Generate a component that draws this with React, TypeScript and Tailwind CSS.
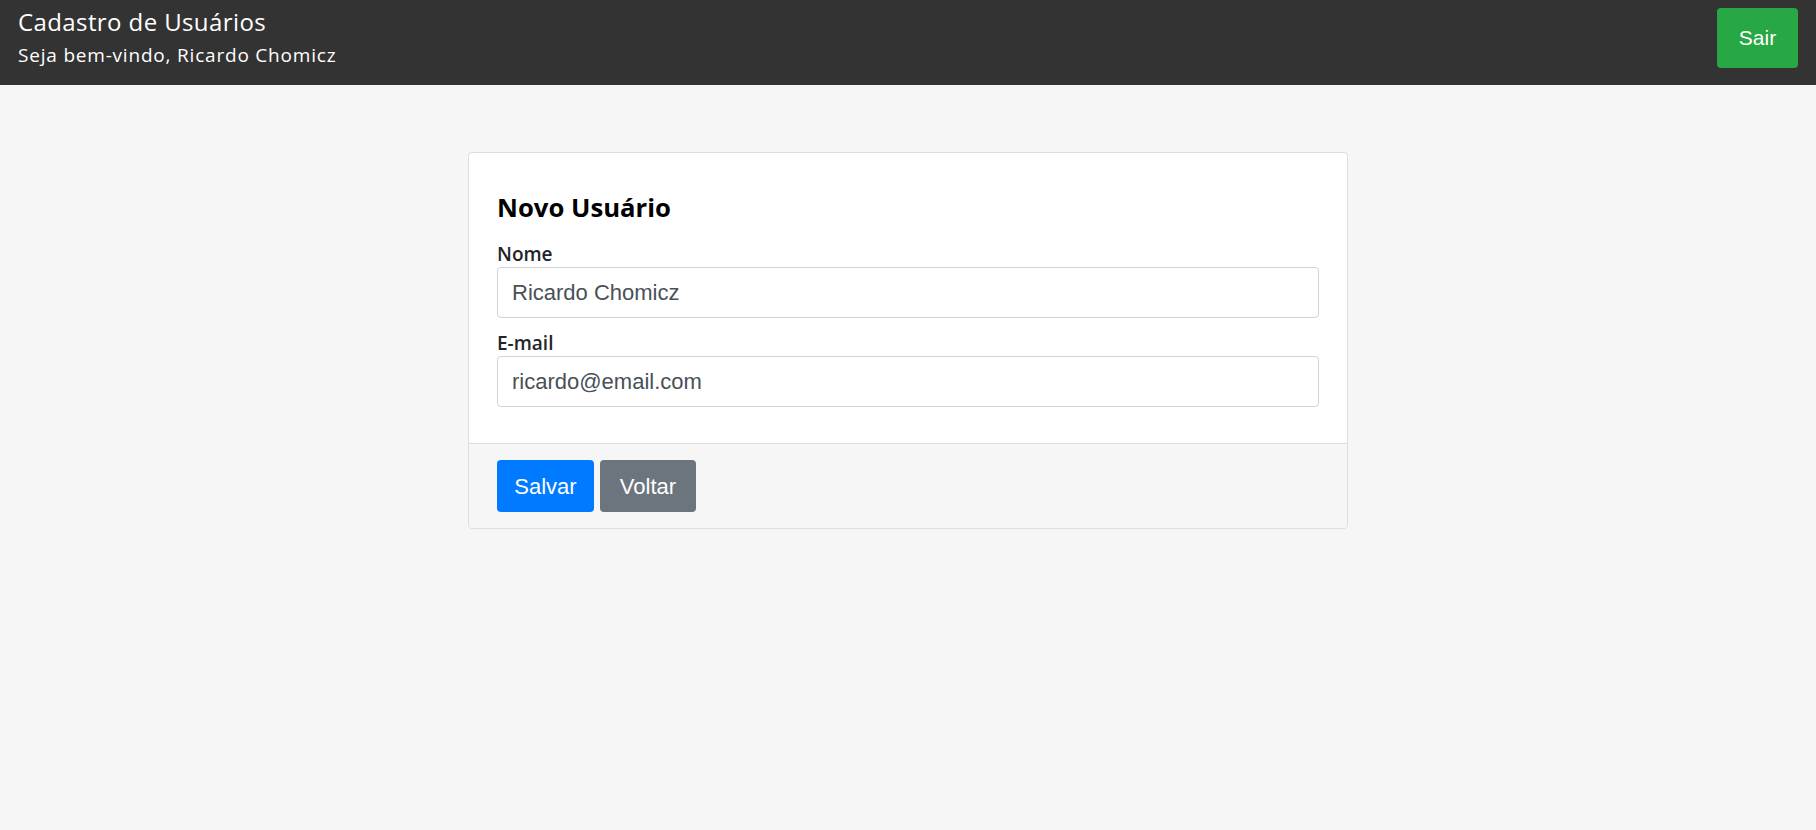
import { useState } from 'react'

export default function App() {
  const [nome, setNome] = useState('Ricardo Chomicz')
  const [email, setEmail] = useState('ricardo@email.com')

  return (
    <div className="min-h-screen bg-[#f6f6f6] font-['Open_Sans',sans-serif]">
      <header className="flex h-[85px] items-start justify-between bg-[#333333] px-[18px]">
        <div className="flex flex-col pt-[7px] text-white">
          <h1 className="text-[24px] leading-[30px] tracking-[0.4px]">Cadastro de Usuários</h1>
          <p className="mt-[4px] text-[19px] leading-[28px] tracking-[0.8px]">
            Seja bem-vindo, Ricardo Chomicz
          </p>
        </div>
        <button className="mt-[8px] flex h-[60px] w-[81px] items-center justify-center rounded-[4px] bg-[#28a745] font-['Liberation_Sans',Arial,sans-serif] text-[21px] text-white">
          Sair
        </button>
      </header>

      <main className="pt-[67px]">
        <div className="mx-auto w-[880px] overflow-hidden rounded-[4px] border border-[#dedede] bg-white">
          <div className="px-[28px] pt-[39px] pb-[36px]">
            <h2 className="mb-[19px] text-[25.7px] font-bold leading-[31px] text-black">Novo Usuário</h2>

            <label className="mb-[1px] block text-[19px] font-semibold leading-[24px] text-[#212529]">
              Nome
            </label>
            <input
              value={nome}
              onChange={(e) => setNome(e.target.value)}
              className="block h-[51px] w-full rounded-[4px] border border-[#ced4da] px-[14px] font-['Liberation_Sans',Arial,sans-serif] text-[22px] text-[#495057] outline-none"
            />

            <label className="mt-[13px] mb-[1px] block text-[19px] font-semibold leading-[24px] text-[#212529]">
              E-mail
            </label>
            <input
              value={email}
              onChange={(e) => setEmail(e.target.value)}
              className="block h-[51px] w-full rounded-[4px] border border-[#ced4da] px-[14px] font-['Liberation_Sans',Arial,sans-serif] text-[22px] text-[#495057] outline-none"
            />
          </div>

          <div className="flex gap-[6px] border-t border-[#dedede] bg-[#f6f6f6] px-[28px] py-[16px]">
            <button className="flex h-[52px] w-[97px] items-center justify-center rounded-[4px] bg-[#007bff] font-['Liberation_Sans',Arial,sans-serif] text-[22px] text-white">
              Salvar
            </button>
            <button className="flex h-[52px] w-[96px] items-center justify-center rounded-[4px] bg-[#6c757d] font-['Liberation_Sans',Arial,sans-serif] text-[22px] text-white">
              Voltar
            </button>
          </div>
        </div>
      </main>
    </div>
  )
}
